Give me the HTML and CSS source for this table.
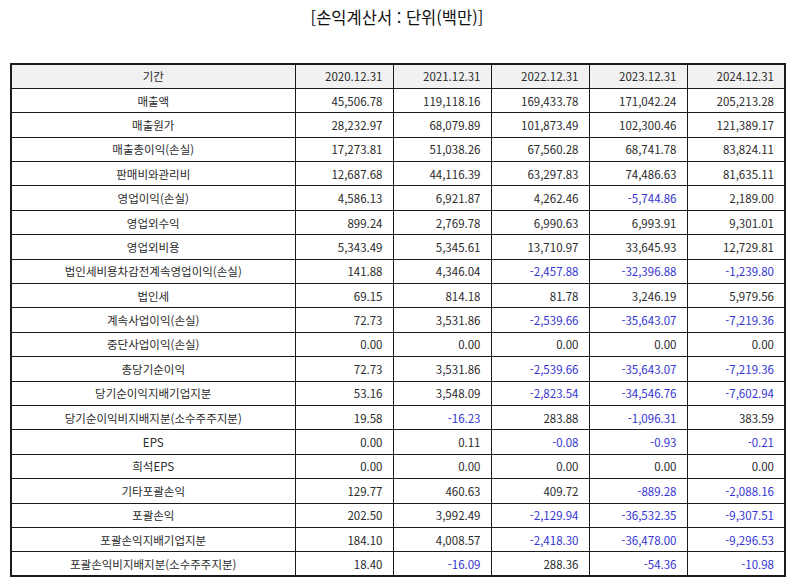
FILE: index.html
```html
<!DOCTYPE html>
<html lang="ko">
<head>
<meta charset="utf-8">
<title>손익계산서</title>
<link rel="stylesheet" href="styles.css">
</head>
<body>
<h1 class="title">[손익계산서 : 단위(백만)]</h1>
<table class="fin">
<colgroup>
<col class="c-label"><col class="c-num"><col class="c-num"><col class="c-num"><col class="c-num"><col class="c-num">
</colgroup>
<thead>
<tr><th>기간</th><th>2020.12.31</th><th>2021.12.31</th><th>2022.12.31</th><th>2023.12.31</th><th>2024.12.31</th></tr>
</thead>
<tbody>
<tr><td>매출액</td><td>45,506.78</td><td>119,118.16</td><td>169,433.78</td><td>171,042.24</td><td>205,213.28</td></tr>
<tr><td>매출원가</td><td>28,232.97</td><td>68,079.89</td><td>101,873.49</td><td>102,300.46</td><td>121,389.17</td></tr>
<tr><td>매출총이익(손실)</td><td>17,273.81</td><td>51,038.26</td><td>67,560.28</td><td>68,741.78</td><td>83,824.11</td></tr>
<tr><td>판매비와관리비</td><td>12,687.68</td><td>44,116.39</td><td>63,297.83</td><td>74,486.63</td><td>81,635.11</td></tr>
<tr><td>영업이익(손실)</td><td>4,586.13</td><td>6,921.87</td><td>4,262.46</td><td class="neg">-5,744.86</td><td>2,189.00</td></tr>
<tr><td>영업외수익</td><td>899.24</td><td>2,769.78</td><td>6,990.63</td><td>6,993.91</td><td>9,301.01</td></tr>
<tr><td>영업외비용</td><td>5,343.49</td><td>5,345.61</td><td>13,710.97</td><td>33,645.93</td><td>12,729.81</td></tr>
<tr><td>법인세비용차감전계속영업이익(손실)</td><td>141.88</td><td>4,346.04</td><td class="neg">-2,457.88</td><td class="neg">-32,396.88</td><td class="neg">-1,239.80</td></tr>
<tr><td>법인세</td><td>69.15</td><td>814.18</td><td>81.78</td><td>3,246.19</td><td>5,979.56</td></tr>
<tr><td>계속사업이익(손실)</td><td>72.73</td><td>3,531.86</td><td class="neg">-2,539.66</td><td class="neg">-35,643.07</td><td class="neg">-7,219.36</td></tr>
<tr><td>중단사업이익(손실)</td><td>0.00</td><td>0.00</td><td>0.00</td><td>0.00</td><td>0.00</td></tr>
<tr><td>총당기순이익</td><td>72.73</td><td>3,531.86</td><td class="neg">-2,539.66</td><td class="neg">-35,643.07</td><td class="neg">-7,219.36</td></tr>
<tr><td>당기순이익지배기업지분</td><td>53.16</td><td>3,548.09</td><td class="neg">-2,823.54</td><td class="neg">-34,546.76</td><td class="neg">-7,602.94</td></tr>
<tr><td>당기순이익비지배지분(소수주주지분)</td><td>19.58</td><td class="neg">-16.23</td><td>283.88</td><td class="neg">-1,096.31</td><td>383.59</td></tr>
<tr><td>EPS</td><td>0.00</td><td>0.11</td><td class="neg">-0.08</td><td class="neg">-0.93</td><td class="neg">-0.21</td></tr>
<tr><td>희석EPS</td><td>0.00</td><td>0.00</td><td>0.00</td><td>0.00</td><td>0.00</td></tr>
<tr><td>기타포괄손익</td><td>129.77</td><td>460.63</td><td>409.72</td><td class="neg">-889.28</td><td class="neg">-2,088.16</td></tr>
<tr><td>포괄손익</td><td>202.50</td><td>3,992.49</td><td class="neg">-2,129.94</td><td class="neg">-36,532.35</td><td class="neg">-9,307.51</td></tr>
<tr><td>포괄손익지배기업지분</td><td>184.10</td><td>4,008.57</td><td class="neg">-2,418.30</td><td class="neg">-36,478.00</td><td class="neg">-9,296.53</td></tr>
<tr><td>포괄손익비지배지분(소수주주지분)</td><td>18.40</td><td class="neg">-16.09</td><td>288.36</td><td class="neg">-54.36</td><td class="neg">-10.98</td></tr>
</tbody>
</table>
</body>
</html>
```

FILE: styles.css
```css
html, body {
  margin: 0;
  padding: 0;
  background: #fff;
}
body {
  font-family: "Noto Sans CJK KR", "Noto Sans", sans-serif;
  color: #222;
}
.title {
  margin: 0;
  padding-top: 4px;
  height: 63px;
  box-sizing: border-box;
  text-align: center;
  font-size: 16.5px;
  font-weight: normal;
  line-height: 26px;
  color: #111;
}
.fin {
  margin-left: 10px;
  width: 774px;
  border-collapse: collapse;
  table-layout: fixed;
  border: 2px solid #1a1a1a;
  font-size: 11.5px;
}
.c-label { width: 284px; }
.c-num { width: 98px; }
.fin th, .fin td {
  border: 1px solid #1a1a1a;
  height: 24.4px;
  padding: 0 10px 0 4px;
  line-height: 14px;
  box-sizing: border-box;
  white-space: nowrap;
  color: #2a2a2a;
}
.fin th {
  background: #f1f1f1;
  font-weight: normal;
  text-align: right;
}
.fin td {
  text-align: right;
}
.fin th:first-child, .fin td:first-child {
  text-align: center;
  padding: 0;
}
.fin td.neg {
  color: #3434d2;
}
```
